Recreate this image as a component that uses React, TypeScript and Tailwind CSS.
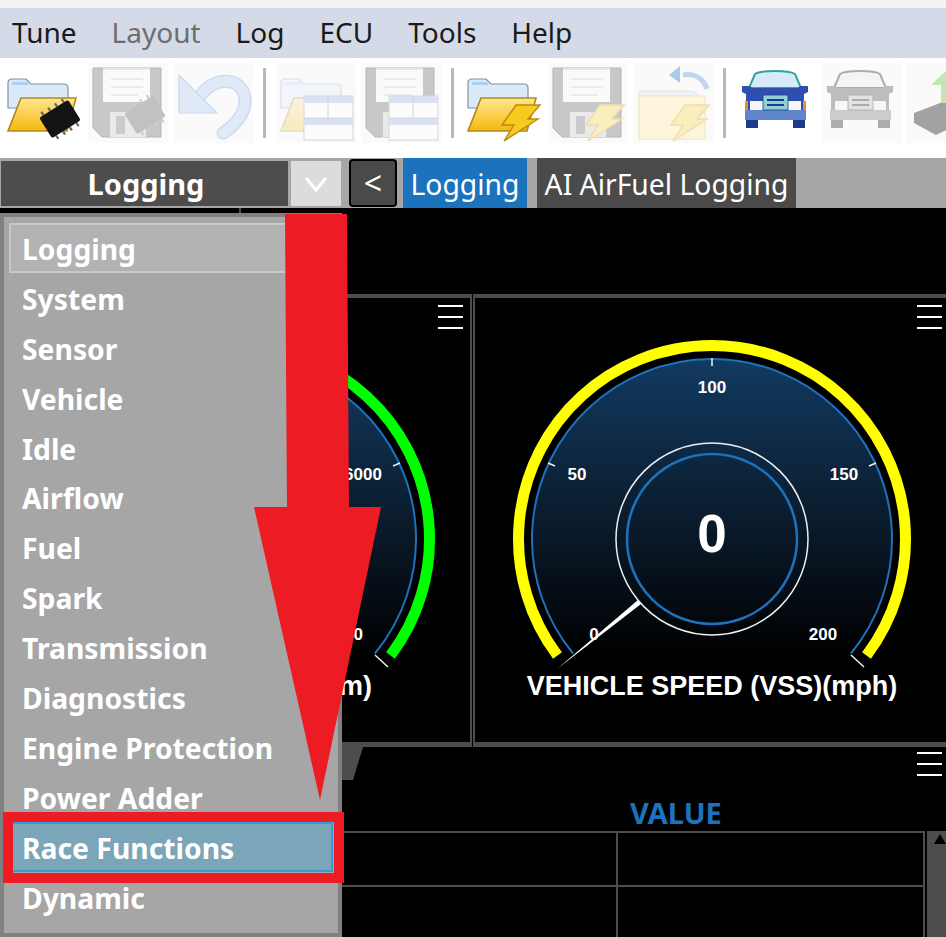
import type { ReactNode } from "react";

/* ===========================
   DATA
=========================== */

const menuItems = ["Tune", "Layout", "Log", "ECU", "Tools", "Help"];

const categories = [
  "Logging",
  "System",
  "Sensor",
  "Vehicle",
  "Idle",
  "Airflow",
  "Fuel",
  "Spark",
  "Transmission",
  "Diagnostics",
  "Engine Protection",
  "Power Adder",
  "Race Functions",
  "Dynamic",
];

/* ===========================
   TOOLBAR ICONS
=========================== */

function FolderOpen({ fade = false }: { fade?: boolean }) {
  return (
    <g opacity={fade ? 0.35 : 1}>
      <path d="M5 20q0-4 4-4h14l5 5h33q4 0 4 4v20H5z" fill="#dbe9f8" stroke="#7f93a8" strokeWidth="1.2" />
      <path d="M9 19h15l2 3H9z" fill="#a9d0f5" />
      <path d="M18 35H73L64 68H5z" fill="url(#folderFill)" stroke="#b08a1a" strokeWidth="1.6" />
    </g>
  );
}

function Floppy() {
  return (
    <g>
      <path d="M5 5H73V74H14L5 65z" fill="#b4b4b4" stroke="#9a9a9a" />
      <path d="M15 5H62V39H15z" fill="#fafafa" />
      <path d="M15 5H62V7H15z" fill="#f0d8e0" />
      <path d="M23 16H55M23 24H55M23 32H50" stroke="#dedede" strokeWidth="1.4" />
      <path d="M22 49H58V74H22z" fill="#e4e4e4" />
      <path d="M28 53H37V71H28z" fill="#b8b8b8" />
    </g>
  );
}

function Chip({ x, y, fill, leg }: { x: number; y: number; fill: string; leg: string }) {
  return (
    <g transform={`translate(${x} ${y}) rotate(-32)`}>
      <path d="M-12 -12v-4M-4 -12v-4M4 -12v-4M12 -12v-4M-12 12v4M-4 12v4M4 12v4M12 12v4" stroke={leg} strokeWidth="2.2" />
      <rect x="-17" y="-12" width="34" height="24" rx="2" fill={fill} />
    </g>
  );
}

function Grid() {
  return (
    <g>
      <rect x="28" y="33" width="49" height="44" fill="#fdfdfd" stroke="#c8c8c8" />
      <rect x="28" y="33" width="49" height="7" fill="#ccd7ef" />
      <rect x="28" y="55" width="49" height="7" fill="#ccd7ef" />
      <path d="M52 33V55M28 55H77" stroke="#b9c4dc" strokeWidth="1" />
    </g>
  );
}

function Bolt({ x, y, fade = false }: { x: number; y: number; fade?: boolean }) {
  return (
    <path
      transform={`translate(${x} ${y})`}
      d="M14 0H38L26 14H36L2 36L12 20H0z"
      fill={fade ? "#fbe9a3" : "#f8c91e"}
      stroke={fade ? "#e6d38c" : "#b98a10"}
      strokeWidth="1.4"
    />
  );
}

function Car({ gray = false }: { gray?: boolean }) {
  const body = gray ? "#a4a4a4" : "#2f4fb0";
  const dark = gray ? "#8c8c8c" : "#1e3a8c";
  const low = gray ? "#b9b9b9" : "#5f86c8";
  return (
    <g>
      <path d="M10 57H22V65H10zM57 57H69V65H57z" fill={dark} />
      <path d="M13 25L19 11Q24 8 39 8T59 11L65 25z" fill={gray ? "#f4f4f4" : "#d6eaf8"} stroke={gray ? "#8c8c8c" : "#2fa7a0"} strokeWidth="2" />
      <path d="M6 23H14L16 25H62L64 23H72V29L68 31V47H10V31L6 29z" fill={body} />
      <path d="M9 47H70V57H9z" fill={low} />
      <path d="M14 38H27V47H14zM52 38H65V47H52z" fill="#f7f7f7" />
      <path d="M27 32H52V47H27z" fill={gray ? "#d8d8d8" : "#8fd0d0"} stroke={dark} strokeWidth="0.8" />
      <path d="M31 37H48M31 42H48" stroke={dark} strokeWidth="1.8" />
      {!gray && <path d="M9 38H12V47H9zM67 38H70V47H67z" fill="#f08a24" />}
    </g>
  );
}

function ToolIcon({ dim = false, children }: { dim?: boolean; children: ReactNode }) {
  return (
    <div className={`h-20 w-20 shrink-0 ${dim ? "bg-[#fafafa]" : ""}`}>
      <svg viewBox="0 0 80 80" className={`h-20 w-20 ${dim ? "opacity-70" : ""}`}>
        {children}
      </svg>
    </div>
  );
}

function ToolSep({ extra = "" }: { extra?: string }) {
  return <div className={`mx-[5px] mt-[5px] h-[70px] w-[3px] shrink-0 bg-[#b3b9c4] ${extra}`} />;
}

/* ===========================
   GAUGE
=========================== */

function point(cx: number, cy: number, r: number, deg: number) {
  const a = (deg * Math.PI) / 180;
  return `${cx + r * Math.cos(a)} ${cy + r * Math.sin(a)}`;
}

function arc(cx: number, cy: number, r: number, below: number) {
  return `M${point(cx, cy, r, 180 - below)}A${r} ${r} 0 1 1 ${point(cx, cy, r, below)}`;
}

function Gauge({
  id,
  cx,
  color,
  labels,
  value,
  title,
  titleX,
  titleAnchor,
}: {
  id: string;
  cx: number;
  color: string;
  labels: [string, number, number][];
  value?: string;
  title: string;
  titleX: number;
  titleAnchor: "middle" | "end";
}) {
  const cy = 241;
  return (
    <svg width="473" height="444" className="block">
      <defs>
        <linearGradient id={id} gradientUnits="userSpaceOnUse" x1="0" y1={cy - 180} x2="0" y2={cy + 118}>
          <stop offset="0" stopColor="#123a60" />
          <stop offset="0.55" stopColor="#0a1b2c" />
          <stop offset="1" stopColor="#000000" />
        </linearGradient>
      </defs>
      <path d={arc(cx, cy, 180, 39.5) + "z"} fill={`url(#${id})`} />
      <path d={arc(cx, cy, 180, 39.5)} fill="none" stroke="#1c73bd" strokeWidth="2" />
      <path d={arc(cx, cy, 193.5, 37)} fill="none" stroke={color} strokeWidth="11" />
      <circle cx={cx} cy={cy} r="96" fill="none" stroke="#f0f0f0" strokeWidth="1.5" />
      <circle cx={cx} cy={cy} r="85" fill="none" stroke="#1c73bd" strokeWidth="2.5" />
      <path
        d={`M${cx} ${cy - 181}v8M${cx - 164} ${cy - 76}l7 3M${cx + 164} ${cy - 76}l-7 3M${cx + 139} ${cy + 116}l13 12`}
        stroke="#f0f0f0"
        strokeWidth="1.5"
        fill="none"
      />
      <polygon
        points={`${cx - 74} ${cy + 61} ${cx - 71} ${cy + 65} ${cx - 155} ${cy + 130}`}
        fill="#ffffff"
      />
      {labels.map(([text, dx, dy]) => (
        <text
          key={text}
          x={cx + dx}
          y={cy + dy}
          textAnchor="middle"
          fill="#ffffff"
          className="font-['Liberation_Sans',sans-serif] text-[17px] font-bold"
        >
          {text}
        </text>
      ))}
      {value && (
        <text
          x={cx}
          y={cy + 13}
          textAnchor="middle"
          fill="#ffffff"
          className="font-['Liberation_Sans',sans-serif] text-[53px] font-bold"
        >
          {value}
        </text>
      )}
      <text
        x={titleX}
        y={397}
        textAnchor={titleAnchor}
        fill="#ffffff"
        className="font-['Liberation_Sans',sans-serif] text-[27px] font-bold"
      >
        {title}
      </text>
    </svg>
  );
}

function Burger({ place }: { place: string }) {
  return (
    <div className={`absolute flex w-[25px] flex-col gap-[9px] ${place}`}>
      <div className="h-[2px] bg-white" />
      <div className="h-[2px] bg-white" />
      <div className="h-[2px] bg-white" />
    </div>
  );
}

/* ===========================
   PAGE
=========================== */

export default function App() {
  return (
    <div className="relative flex h-[937px] w-[946px] flex-col overflow-hidden bg-black font-['Noto_Sans',sans-serif]">
      <svg width="0" height="0" className="absolute">
        <defs>
          <linearGradient id="folderFill" x1="0" y1="0" x2="0" y2="1">
            <stop offset="0" stopColor="#ffe690" />
            <stop offset="1" stopColor="#f6b90c" />
          </linearGradient>
        </defs>
      </svg>

      {/* Window strip */}
      <div className="h-2 shrink-0 bg-[#f3f3f3]" />

      {/* Menu */}
      <div className="flex h-[50px] shrink-0 items-center gap-[35px] bg-[#d5dae8] pb-[2px] pl-[12px] text-[28px]">
        {menuItems.map((m) => (
          <span key={m} className={m === "Layout" ? "text-[#6d6d6d]" : "text-[#1a1a1a]"}>
            {m}
          </span>
        ))}
      </div>

      {/* Toolbar */}
      <div className="flex h-[100px] shrink-0 gap-[5px] overflow-hidden bg-white pl-[3px] pt-[5px]">
        <ToolIcon>
          <FolderOpen />
          <Chip x={57} y={56} fill="#141414" leg="#666666" />
        </ToolIcon>
        <ToolIcon dim>
          <Floppy />
          <Chip x={57} y={52} fill="#aaaaaa" leg="#bbbbbb" />
        </ToolIcon>
        <ToolIcon dim>
          <path d="M28 32C42 12 72 14 72 38C72 52 60 64 50 70" fill="none" stroke="#b4cbe9" strokeWidth="13" strokeLinecap="round" />
          <path d="M28 32C42 12 72 14 72 38C72 52 60 64 50 70" fill="none" stroke="#d6e4f7" strokeWidth="10.5" strokeLinecap="round" />
          <path d="M6 12L44 50H6z" fill="#d6e4f7" stroke="#b4cbe9" strokeWidth="1.2" strokeLinejoin="round" />
        </ToolIcon>
        <ToolSep />
        <ToolIcon dim>
          <FolderOpen fade />
          <Grid />
        </ToolIcon>
        <ToolIcon dim>
          <Floppy />
          <Grid />
        </ToolIcon>
        <ToolSep extra="mr-[4px]" />
        <ToolIcon>
          <FolderOpen />
          <Bolt x={39} y={42} />
        </ToolIcon>
        <ToolIcon dim>
          <Floppy />
          <Bolt x={38} y={42} fade />
        </ToolIcon>
        <ToolIcon dim>
          <path d="M6 28H60L66 33V45H6z" fill="#e8f0fa" stroke="#e6dcc0" />
          <path d="M6 33H72V76H6z" fill="#fff4d0" stroke="#efdca8" strokeWidth="1.2" />
          <path d="M74 26C70 14 60 10 50 12" fill="none" stroke="#a9c6e8" strokeWidth="5" />
          <path d="M47 3V20L36 12z" fill="#8fb5e0" />
          <Bolt x={38} y={42} fade />
        </ToolIcon>
        <ToolSep />
        <ToolIcon>
          <Car />
        </ToolIcon>
        <ToolIcon dim>
          <Car gray />
        </ToolIcon>
        <ToolIcon dim>
          <path d="M8 50L60 30V58L30 72L8 60z" fill="#7d7d7d" />
          <path d="M45 3L65 22H55V40H35V22H25z" fill="#a5e493" />
        </ToolIcon>
      </div>

      {/* Category bar */}
      <div className="flex h-[50px] shrink-0 items-stretch bg-[#a6a6a6] text-[28.3px] text-white">
        <div className="ml-[1px] mt-[3px] mb-[2px] flex w-[340px] gap-[3px]">
          <div className="flex w-[287px] items-center justify-center bg-[#4d4d4d] pl-[3px] text-[29px] font-bold">Logging</div>
          <div className="flex w-[50px] items-center justify-center bg-[#dcdcdc]">
            <svg width="24" height="16" viewBox="0 0 24 16">
              <path d="M2 2L12 14L22 2" fill="none" stroke="#ffffff" strokeWidth="3" />
            </svg>
          </div>
        </div>
        <div className="ml-[8px] my-[1px] flex w-[48px] items-center justify-center rounded-[4px] border-2 border-black bg-[#4a4a4a] text-[32px]">
          &lt;
        </div>
        <div className="ml-[6px] flex w-[124px] items-center justify-center bg-[#1c73bd] pt-[2px]">Logging</div>
        <div className="ml-[10px] flex w-[259px] items-center justify-center bg-[#4a4a4a] pt-[2px]">AI AirFuel Logging</div>
      </div>

      {/* Workspace */}
      <div className="flex min-h-0 flex-1 flex-col">
        <div className="h-[5px] w-[241px] shrink-0 border-r-2 border-[#4d4d4d]" />
        <div className="h-[81px] shrink-0" />

        <div className="flex h-[453px] shrink-0 gap-px">
          <div className="relative h-[453px] w-[472px] shrink-0 overflow-hidden border-t-4 border-r-2 border-b-[5px] border-[#4d4d4d]">
            <Gauge
              id="rpmDial"
              cx={236}
              color="#00ff00"
              labels={[
                ["6000", 127, -59],
                ["8000", 108, 101],
              ]}
              title="(rpm)"
              titleX={372}
              titleAnchor="end"
            />
            <Burger place="right-[7px] top-[7px]" />
          </div>
          <div className="relative h-[453px] w-[473px] shrink-0 overflow-hidden border-t-4 border-l-2 border-b-[5px] border-[#4d4d4d]">
            <Gauge
              id="vssDial"
              cx={237}
              color="#ffff00"
              labels={[
                ["0", -118, 101],
                ["50", -135, -59],
                ["100", 0, -146],
                ["150", 132, -59],
                ["200", 111, 101],
              ]}
              value="0"
              title="VEHICLE SPEED (VSS)(mph)"
              titleX={237}
              titleAnchor="middle"
            />
            <Burger place="right-[4px] top-[7px]" />
          </div>
        </div>

        {/* Lower panel */}
        <div className="relative min-h-0 flex-1">
          <svg width="24" height="34" className="absolute left-[341px] top-0">
            <path d="M0 0H22L12 33H0z" fill="#4d4d4d" />
          </svg>
          <Burger place="right-[4px] top-[5px]" />
          <div className="flex h-[84px] items-end pl-[630px] text-[29px] font-bold leading-[36px] text-[#1c73bd]">
            VALUE
          </div>
          <div className="flex">
            <div className="w-[925px] shrink-0 border-t-2 border-r-2 border-[#4d4d4d]">
              {[0, 1].map((row) => (
                <div key={row} className="grid h-[54px] grid-cols-[618px_1fr] border-b-2 border-[#4d4d4d]">
                  <div className="border-r-2 border-[#4d4d4d]" />
                  <div />
                </div>
              ))}
            </div>
            <div className="ml-[2px] h-[110px] w-[26px] shrink-0 bg-[#4d4d4d] pl-[7px] pt-[3px]">
              <svg width="12" height="10">
                <path d="M6 0L12 10H0z" fill="#000000" />
              </svg>
            </div>
          </div>
        </div>
      </div>

      {/* Category dropdown */}
      <div className="absolute left-0 top-[213px] h-[724px] w-[342px] border-4 border-[#808080] bg-[#a6a6a6] px-[5px] pt-[6px] text-[28.3px] font-bold text-white">
        {categories.map((c) => (
          <div
            key={c}
            className={`flex h-[49.95px] items-center border-2 pl-[11px] pt-[2px] ${
              c === "Logging"
                ? "border-[#c8c8c8] bg-[#b2b2b2]"
                : c === "Race Functions"
                  ? "border-[#2a9fdc] bg-[#7ba5b8]"
                  : "border-transparent"
            }`}
          >
            {c}
          </div>
        ))}
      </div>

      {/* Red annotations */}
      <div className="absolute left-[3px] top-[812px] h-[71px] w-[341px] border-[10px] border-[#ed1c24]" />
      <svg width="946" height="937" className="pointer-events-none absolute left-0 top-0">
        <polygon points="285,214 347,214 349,507 381,507 320,800 254,507 287,507" fill="#ed1c24" />
      </svg>
    </div>
  );
}
